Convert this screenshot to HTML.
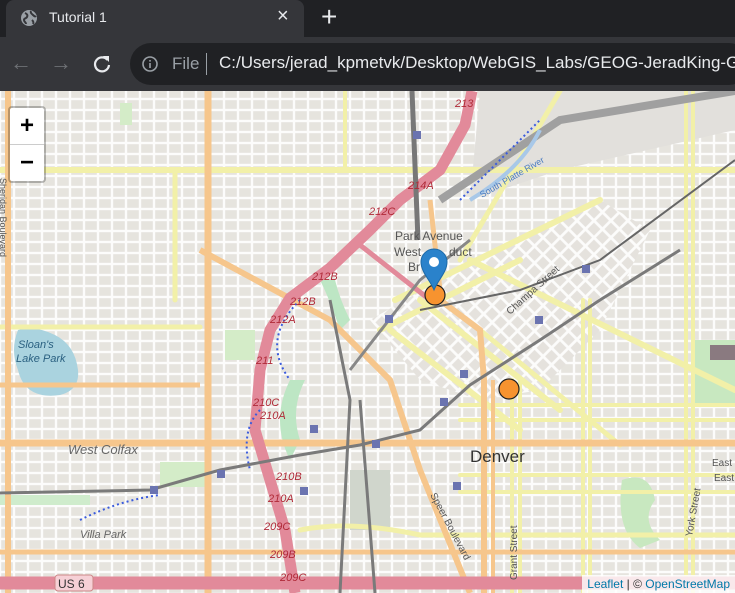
<!DOCTYPE html>
<html><head><meta charset="utf-8"><style>
*{margin:0;padding:0;box-sizing:border-box}
body{width:735px;height:593px;overflow:hidden;background:#202124;font-family:"Liberation Sans",sans-serif;position:relative}
.tabbar{position:absolute;left:0;top:0;width:735px;height:37px;background:#202124}
.tab{position:absolute;left:6px;top:0;width:298px;height:37px;background:#35363a;border-radius:8px 8px 0 0}
.toolbar{position:absolute;left:0;top:37px;width:735px;height:54px;background:#35363a}
.omni{position:absolute;left:130px;top:6px;width:620px;height:42px;background:#202124;border-radius:21px}
.map{position:absolute;left:0;top:91px;width:735px;height:502px;overflow:hidden;background:#f2efe9}
.zoom{position:absolute;left:8px;top:15px;width:38px;height:77px;background:#fff;border:2px solid rgba(0,0,0,.25);border-radius:4px;background-clip:padding-box}
.zoom div{height:37px;text-align:center;font:bold 24px/36px "Liberation Sans",sans-serif;color:#000}
.attr{position:absolute;right:0;bottom:0;background:rgba(255,255,255,.8);font-size:12px;padding:2px 5px;color:#333}
.attr a{color:#0078a8}
</style></head><body>
<div class="tabbar">
 <div class="tab">
  <svg style="position:absolute;left:14px;top:9px" width="18" height="18" viewBox="0 0 18 18"><circle cx="9" cy="9" r="8" fill="#9aa0a6"/><path d="M5 4c2 1 3 2 2 4s-3 1-3 3 2 2 2 4M11 2c-1 2 1 3 2 4s2 2 3 1M12 11c1 1 2 2 1 4" stroke="#35363a" stroke-width="2" fill="none"/></svg>
  <div style="position:absolute;left:43px;top:9px;color:#e8eaed;font-size:14px">Tutorial 1</div>
  <div style="position:absolute;left:271px;top:5px;color:#e8eaed;font-size:20px">×</div>
 </div>
 <div style="position:absolute;left:321px;top:1px;color:#e8eaed;font-size:28px;font-weight:300">+</div>
</div>
<div class="toolbar">
 <div style="position:absolute;left:10px;top:13px;color:#6e7175;font-size:22px">←</div>
 <div style="position:absolute;left:50px;top:13px;color:#6e7175;font-size:22px">→</div>
 <svg style="position:absolute;left:92px;top:17px" width="20" height="20" viewBox="0 0 20 20"><path d="M15.5 6A7 7 0 1 0 17 11" stroke="#e8eaed" stroke-width="2.2" fill="none"/><path d="M11 2h6v6z" fill="#e8eaed"/></svg>
 <div class="omni">
  <svg style="position:absolute;left:12px;top:13px" width="16" height="16" viewBox="0 0 16 16"><circle cx="8" cy="8" r="7" stroke="#9aa0a6" stroke-width="1.6" fill="none"/><rect x="7.2" y="7" width="1.6" height="5" fill="#9aa0a6"/><rect x="7.2" y="4" width="1.6" height="1.6" fill="#9aa0a6"/></svg>
  <div style="position:absolute;left:42px;top:11px;color:#9aa0a6;font-size:17px">File</div>
  <div style="position:absolute;left:76px;top:10px;width:1px;height:22px;background:#9aa0a6"></div>
  <div style="position:absolute;left:89px;top:10px;color:#e8eaed;font-size:17px;white-space:nowrap">C:/Users/jerad_kpmetvk/Desktop/WebGIS_Labs/GEOG-JeradKing-G</div>
 </div>
</div>
<div class="map">
<svg width="735" height="502" viewBox="0 91 735 502" style="position:absolute;left:0;top:0">
<defs>
<pattern id="blk" width="14" height="11" patternUnits="userSpaceOnUse"><rect width="14" height="11" fill="#fcfcfb"/><rect x="1.2" y="1.2" width="11.6" height="8.6" fill="#e6e4de"/></pattern>
<pattern id="blk2" width="12" height="12" patternUnits="userSpaceOnUse" patternTransform="rotate(-45)"><rect width="12" height="12" fill="#fcfcfb"/><rect x="1.4" y="1.4" width="9.2" height="9.2" fill="#e5e2dd"/></pattern>
</defs>
<rect x="0" y="91" width="735" height="502" fill="url(#blk)"/>
<polygon points="370,320 440,280 520,240 600,200 650,230 600,330 540,390 480,400 420,380" fill="url(#blk2)"/>
<polygon points="480,91 735,91 735,130 560,170 470,200" fill="#e2e0dc"/>
<!-- parks -->
<rect x="120" y="103" width="12" height="22" fill="#d4ecc8"/>
<rect x="350" y="470" width="40" height="60" fill="#d0d6cc"/>
<rect x="225" y="330" width="30" height="30" fill="#d4ecc8"/>
<path d="M622 480 Q650 470 655 500 Q640 520 660 540 L640 548 Q615 530 622 480Z" fill="#c8e8c0"/>
<rect x="695" y="340" width="40" height="65" fill="#c8e8c0"/>
<rect x="710" y="345" width="25" height="15" fill="#8a7a80"/>
<rect x="160" y="462" width="50" height="25" fill="#d4ecc8"/>
<rect x="0" y="495" width="90" height="10" fill="#cfeccc"/>
<path d="M290 380 Q270 420 290 460 L300 440 Q290 410 305 380Z" fill="#bde6c4"/>
<path d="M320 280 Q330 300 340 330 L350 320 Q340 300 335 280Z" fill="#bde6c4"/>
<!-- lake -->
<path d="M18 330 Q10 350 18 370 Q25 400 60 395 Q80 390 78 370 Q75 345 55 335 Q35 325 18 330Z" fill="#aad3df"/>
<!-- yellow roads -->
<g stroke="#f2f0a8" stroke-width="6" fill="none" stroke-linecap="round">
<path d="M0 170 H735"/>
<path d="M175 170 V300" stroke-width="5"/>
<path d="M0 327 H200" stroke-width="5"/>
<path d="M300 530 Q350 520 420 535 H735" stroke-width="5"/>
<path d="M395 300 L600 200"/><path d="M380 330 L520 260"/>
<path d="M420 300 L560 410"/><path d="M390 330 L520 430"/>
<path d="M470 260 L735 390"/>
<path d="M480 330 L620 445" stroke-width="5"/>
<path d="M560 91 L460 260" stroke-width="5"/>
<path d="M345 91 V170" stroke-width="4"/>
<path d="M512 380 V593" stroke-width="4"/><path d="M520 380 V593" stroke-width="4"/>
<path d="M583 300 V593" stroke-width="4"/><path d="M590 300 V593" stroke-width="4"/>
<path d="M686 91 V593" stroke-width="4"/><path d="M693 91 V593" stroke-width="4"/>
<path d="M460 405 H735" stroke-width="4"/><path d="M460 420 H735" stroke-width="4"/>
<path d="M460 475 H735" stroke-width="4"/><path d="M460 492 H735" stroke-width="4"/>
</g>
<!-- orange roads -->
<g stroke="#f6c68c" stroke-width="6" fill="none">
<path d="M208 91 V593" stroke-width="7"/>
<path d="M8 91 V593" stroke-width="6"/>
<path d="M0 443 H735" stroke-width="7"/>
<path d="M0 552 H735" stroke-width="5"/>
<path d="M440 300 L480 330 L484 380 V593"/>
<path d="M493 380 V593" stroke-width="4"/>
<path d="M200 250 L330 320 L390 380 L420 470 L470 593"/>
<path d="M0 385 H200" stroke-width="5"/>
<path d="M430 200 L440 290" stroke-width="5"/>
</g>
<!-- highways pink -->
<g stroke="#e28a9a" stroke-width="11" fill="none" stroke-linejoin="round">
<path d="M472 91 L465 125 L440 170 L400 200 L370 230 L330 268 L290 298 L270 330 L260 370 L255 430 L270 480 L285 530 L295 593"/>
<path d="M0 583 H735" stroke-width="13"/>
<path d="M360 245 L430 300" stroke-width="5"/>
</g>
<!-- rail grey -->
<g stroke="#7a7a7a" stroke-width="3" fill="none">
<path d="M0 493 L150 490 L220 470 L300 455 L360 445 L420 430 L470 385 L540 340 L600 300 L680 250"/>
<path d="M330 300 L350 400 L340 593"/><path d="M360 400 L375 593"/>
<path d="M440 200 L560 120 L735 91" stroke="#a0a0a0" stroke-width="8"/>
<path d="M420 310 L520 290 L600 260 L735 160" stroke="#666" stroke-width="2"/>
<path d="M412 91 L418 240" stroke="#777" stroke-width="5"/>
<path d="M350 370 L420 280 L470 240" stroke="#888" stroke-width="3"/>
</g>
<!-- water blue dotted -->
<path d="M260 410 Q240 430 250 470 M300 300 Q260 340 290 380 M460 200 L540 120 M80 520 Q120 500 160 495" stroke="#3a5bdd" stroke-width="2" stroke-dasharray="2 3" fill="none"/>
<path d="M470 200 Q520 170 540 130" stroke="#a8c8e8" stroke-width="4" fill="none"/>
<g fill="#6b74b0">
<rect x="453" y="482" width="8" height="8"/><rect x="300" y="487" width="8" height="8"/><rect x="150" y="486" width="8" height="8"/><rect x="217" y="470" width="8" height="8"/>
<rect x="372" y="440" width="8" height="8"/><rect x="440" y="398" width="8" height="8"/><rect x="460" y="370" width="8" height="8"/><rect x="535" y="316" width="8" height="8"/><rect x="582" y="265" width="8" height="8"/><rect x="385" y="315" width="8" height="8"/><rect x="310" y="425" width="8" height="8"/><rect x="413" y="131" width="8" height="8"/>
</g>
<!-- labels -->
<g font-family="Liberation Sans,sans-serif" font-style="italic" font-size="11" fill="#b02a38">
<text x="455" y="107">213</text><text x="408" y="189">214A</text><text x="369" y="215">212C</text><text x="312" y="280">212B</text><text x="290" y="305">212B</text><text x="270" y="323">212A</text><text x="256" y="364">211</text><text x="253" y="406">210C</text><text x="260" y="419">210A</text><text x="276" y="480">210B</text><text x="268" y="502">210A</text><text x="264" y="530">209C</text><text x="270" y="558">209B</text><text x="280" y="581">209C</text>
</g>
<g font-family="Liberation Sans,sans-serif" fill="#555">
<text x="395" y="240" font-size="12">Park Avenue</text><text x="394" y="256" font-size="12">West</text><text x="449" y="256" font-size="12">duct</text><text x="408" y="271" font-size="12">Br</text>
<text x="470" y="462" font-size="17" fill="#333">Denver</text>
<text x="68" y="454" font-size="13" font-style="italic" fill="#666">West Colfax</text>
<text x="80" y="538" font-size="11" font-style="italic" fill="#666">Villa Park</text>
<text x="18" y="348" font-size="11" font-style="italic" fill="#2a6080">Sloan's</text>
<text x="16" y="362" font-size="11" font-style="italic" fill="#2a6080">Lake Park</text>
<text x="510" y="315" font-size="10" transform="rotate(-42 510 315)">Champa Street</text>
<text x="430" y="495" font-size="10" transform="rotate(62 430 495)">Speer Boulevard</text>
<text x="517" y="580" font-size="10" transform="rotate(-90 517 580)">Grant Street</text>
<text x="692" y="537" font-size="10" transform="rotate(-80 692 537)">York Street</text>
<text x="0" y="178" font-size="9" transform="rotate(90 0 178)">Sheridan Boulevard</text>
<text x="712" y="466" font-size="10">East 1</text><text x="714" y="481" font-size="10">East 13</text>
<text x="482" y="198" font-size="9" fill="#4a7cc0" transform="rotate(-30 482 198)">South Platte River</text>
</g>
<rect x="55" y="575" width="38" height="16" rx="3" fill="#f6d0d6" stroke="#c88"/>
<text x="58" y="588" font-family="Liberation Sans,sans-serif" font-size="12" fill="#333">US 6</text>
<!-- markers -->
<circle cx="435" cy="295" r="10" fill="#f7932f" stroke="#222" stroke-width="1.2"/>
<circle cx="509" cy="389" r="10" fill="#f7932f" stroke="#222" stroke-width="1.2"/>
<path d="M434 290 C430 280 421 272 421 262 A13 13 0 0 1 447 262 C447 272 438 280 434 290Z" fill="#2a82cb" stroke="#1d6aa8" stroke-width="1"/>
<circle cx="434" cy="262" r="5" fill="#fff"/>
</svg>
<div class="zoom"><div style="border-bottom:1px solid #ccc">+</div><div>−</div></div>
<div class="attr"><a>Leaflet</a> | © <a>OpenStreetMap</a></div>
</div>
</body></html>
